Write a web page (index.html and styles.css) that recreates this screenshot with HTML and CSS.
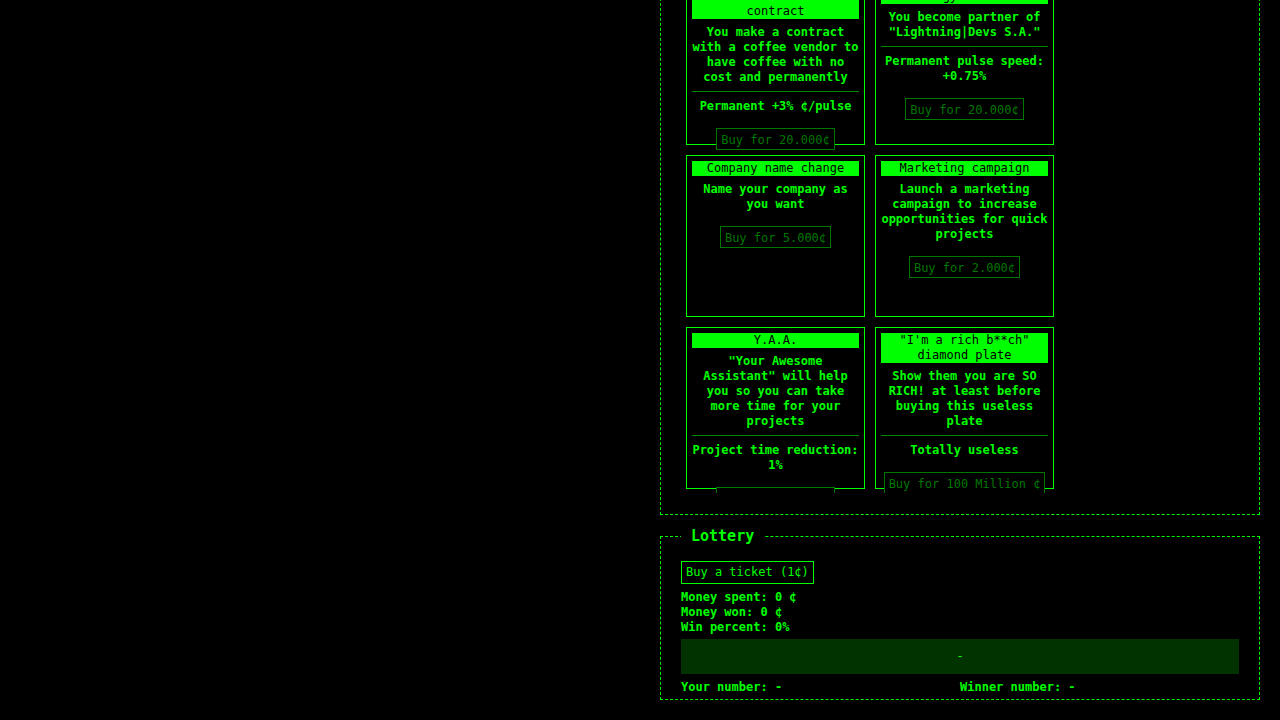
FILE: index.html
```html
<!DOCTYPE html>
<html lang="en">
<head>
    <meta charset="UTF-8">
    <meta name="viewport" content="width=device-width, initial-scale=1.0">
    <title>Upgrades &amp; Lottery</title>
    <link rel="stylesheet" href="styles.css">
</head>
<body>
    <div class="left"></div>

    <div class="side">
        <!-- upgrades -->
        <fieldset class="panel upgrades">
            <legend>Upgrades</legend>
            <div class="list">
                <div class="card">
                    <h3>Unlimited coffee contract</h3>
                    <p class="desc">You make a contract with a coffee vendor to have coffee with no cost and permanently</p>
                    <hr>
                    <p class="effect">Permanent +3% ¢/pulse</p>
                    <button type="button" class="buy">Buy for 20.000¢</button>
                </div>
                <div class="card">
                    <h3>Energy Partner</h3>
                    <p class="desc">You become partner of "Lightning|Devs S.A."</p>
                    <hr>
                    <p class="effect">Permanent pulse speed: +0.75%</p>
                    <button type="button" class="buy">Buy for 20.000¢</button>
                </div>
                <div class="card">
                    <h3>Company name change</h3>
                    <p class="desc">Name your company as you want</p>
                    <button type="button" class="buy">Buy for 5.000¢</button>
                </div>
                <div class="card">
                    <h3>Marketing campaign</h3>
                    <p class="desc">Launch a marketing campaign to increase opportunities for quick projects</p>
                    <button type="button" class="buy">Buy for 2.000¢</button>
                </div>
                <div class="card">
                    <h3>Y.A.A.</h3>
                    <p class="desc">"Your Awesome Assistant" will help you so you can take more time for your projects</p>
                    <hr>
                    <p class="effect">Project time reduction: 1%</p>
                    <button type="button" class="buy">Buy for 10.000¢</button>
                </div>
                <div class="card">
                    <h3>"I'm a rich b**ch" diamond plate</h3>
                    <p class="desc">Show them you are SO RICH! at least before buying this useless plate</p>
                    <hr>
                    <p class="effect">Totally useless</p>
                    <button type="button" class="buy">Buy for 100 Million ¢</button>
                </div>
            </div>
        </fieldset>

        <!-- lottery -->
        <fieldset class="panel lottery">
            <legend>Lottery</legend>
            <button type="button" class="ticket">Buy a ticket (1¢)</button>
            <div class="stats">
                <p>Money spent: 0 ¢</p>
                <p>Money won: 0 ¢</p>
                <p>Win percent: 0%</p>
            </div>
            <div class="draw">-</div>
            <div class="numbers">
                <p>Your number: -</p>
                <p>Winner number: -</p>
            </div>
        </fieldset>
    </div>
</body>
</html>
```

FILE: styles.css
```css
* {margin:0;padding:0;box-sizing:border-box;}
body {background:#000;color:#0f0;height:720px;overflow:hidden;
      font-family:"DejaVu Sans Mono","Liberation Mono",monospace;font-size:12px;line-height:15px;font-weight:bold;
      display:grid;grid-template-columns:1fr 600px;grid-template-rows:minmax(0,1fr);gap:20px;padding:0 20px 20px;
}
/* right column sticks to the bottom, the top overflows out of view */
.side {display:flex;flex-direction:column;justify-content:flex-end;gap:12px;min-height:0;}

.panel {flex:none;border:1px dashed #0f0;}
.panel legend {padding:0 10px;font-size:15px;line-height:18px;}

/* upgrades */
.upgrades {padding:16px 20px 21px;}
.list {overflow:hidden;padding:5px 5px 4px;display:grid;grid-template-columns:179px 179px;gap:10px;}
.card {height:162px;border:1px solid #0f0;padding:5px;text-align:center;}
.card h3 {background:#0f0;color:#000;font-size:12px;font-weight:normal;}
.card .desc {margin-top:6px;}
.card hr {border:0;border-top:1px solid #080;height:0;margin:6px 0 7px;}
.buy {display:block;margin:14px auto 0;background:#000;color:#070;border:1px solid #070;
      font:inherit;font-weight:normal;line-height:16px;padding:3px 4px 1px;
}

/* lottery */
.lottery {padding:16px 20px 4px;}
.ticket {display:block;background:#000;color:#0f0;border:1px solid #0f0;
         font:inherit;font-weight:normal;line-height:17px;padding:2px 4px;
}
.stats {margin-top:6px;}
.draw {margin-top:4px;height:35px;background:#030;display:flex;align-items:center;justify-content:center;font-weight:normal;}
.numbers {margin-top:6px;display:grid;grid-template-columns:1fr 1fr;}
```
